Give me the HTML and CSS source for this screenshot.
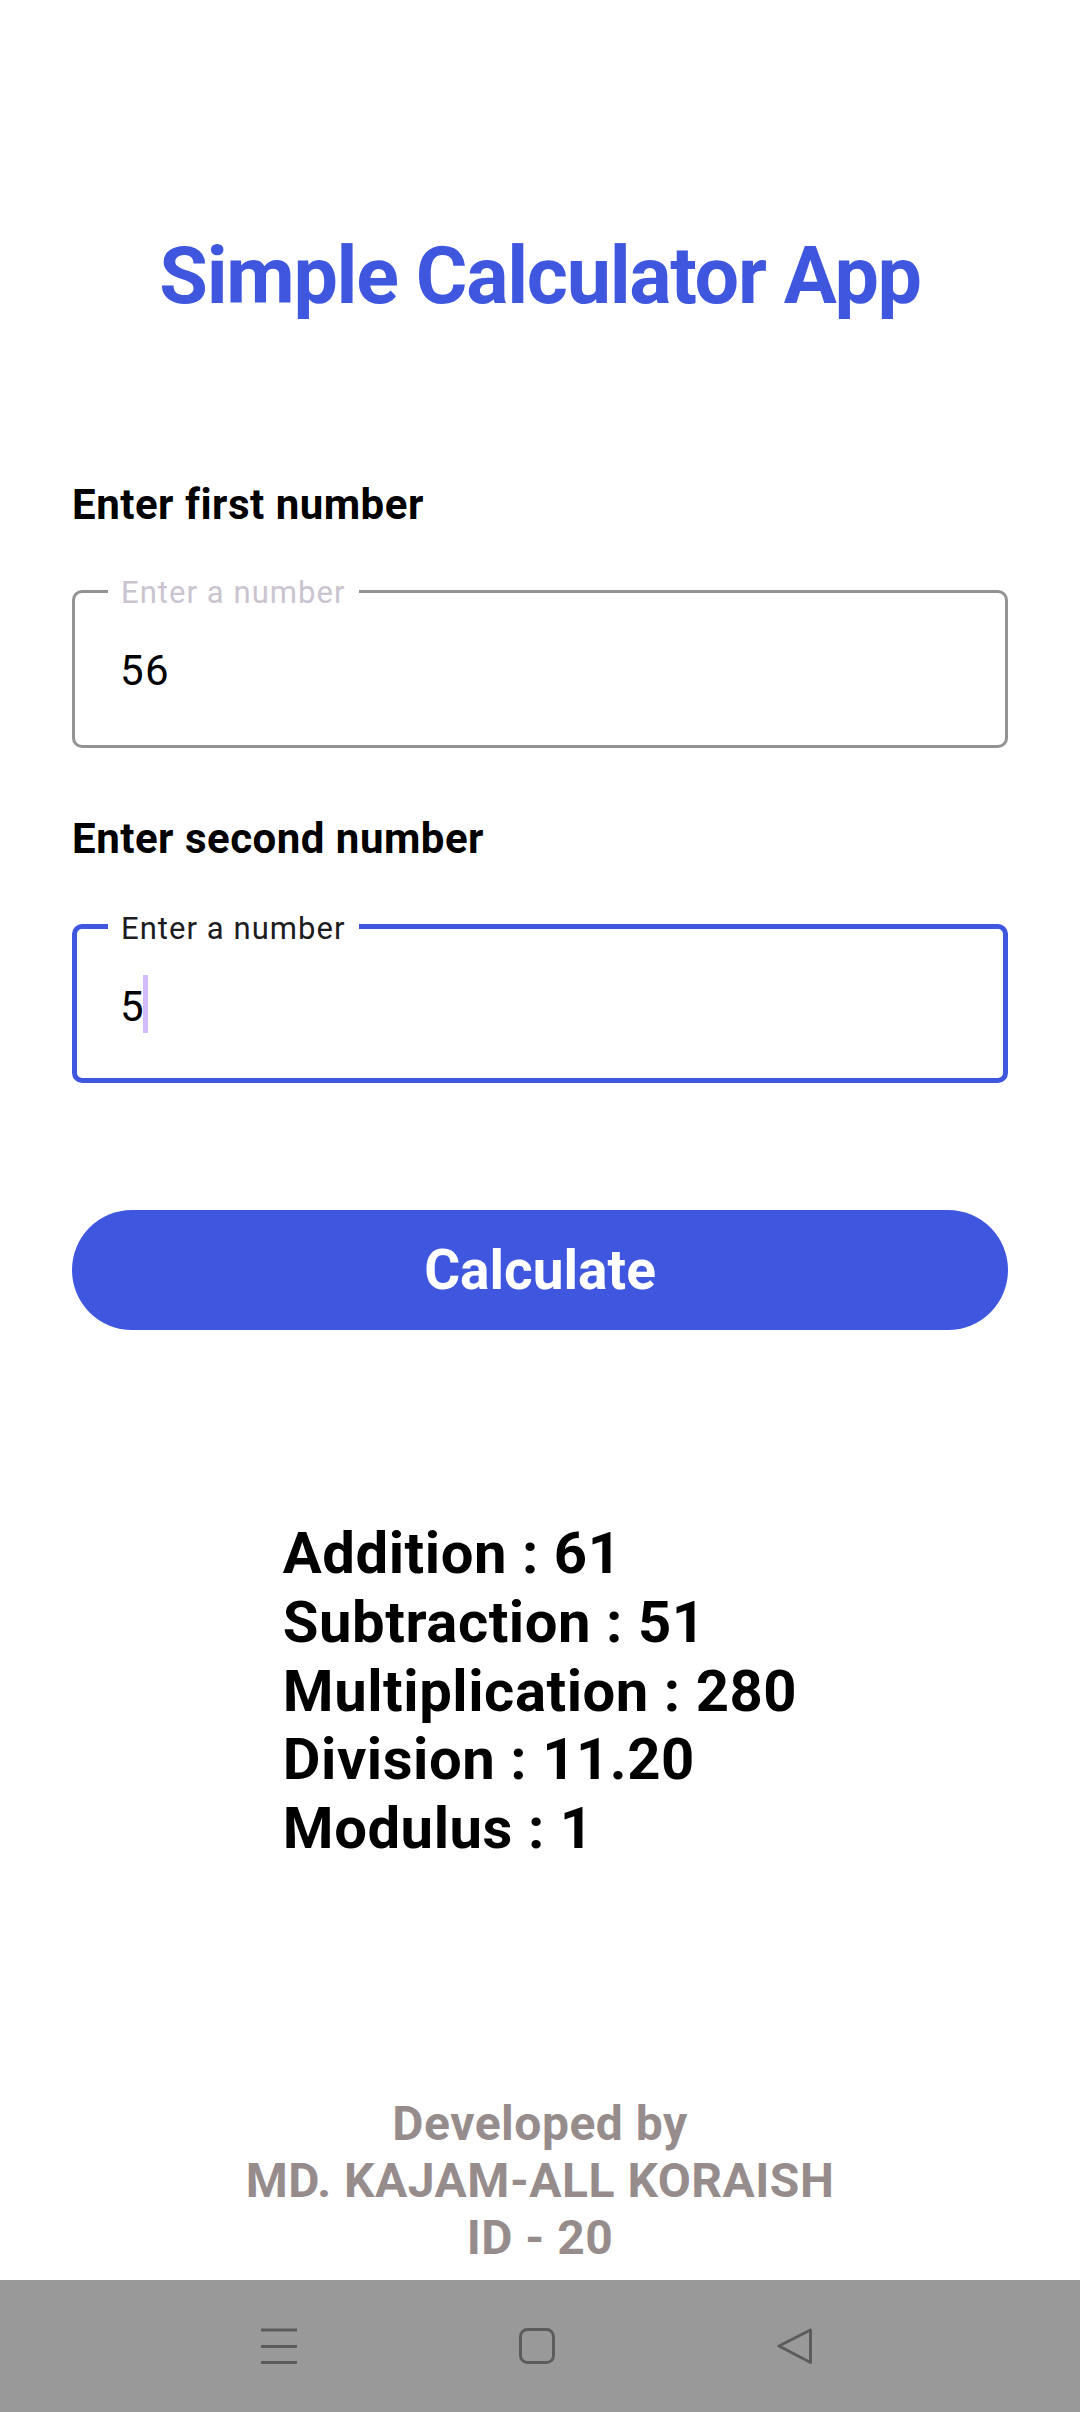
FILE: index.html
```html
<!DOCTYPE html>
<html lang="en">
<head>
<meta charset="utf-8">
<title>Simple Calculator App</title>
<link rel="stylesheet" href="styles.css">
</head>
<body>
<div class="screen">
  <main class="content">
    <h1 class="title">Simple Calculator App</h1>

    <div class="field-label field-label--first">Enter first number</div>
    <div class="field">
      <span class="field-legend">Enter a number</span>
      <span class="field-value">56</span>
    </div>

    <div class="field-label field-label--second">Enter second number</div>
    <div class="field field--focused">
      <span class="field-legend">Enter a number</span>
      <span class="field-value">5<span class="caret"></span></span>
    </div>

    <button class="calc-btn" type="button">Calculate</button>

    <div class="results">
      <div class="results-list">
        <div>Addition : 61</div>
        <div>Subtraction : 51</div>
        <div>Multiplication : 280</div>
        <div>Division : 11.20</div>
        <div>Modulus : 1</div>
      </div>
    </div>

    <footer class="credit">
      <div>Developed by</div>
      <div>MD. KAJAM-ALL KORAISH</div>
      <div>ID - 20</div>
    </footer>
  </main>

  <nav class="navbar">
    <svg class="nav-icon nav-icon--menu" width="36" height="36" viewBox="0 0 36 36">
      <line x1="0" y1="2" x2="36" y2="2"/>
      <line x1="0" y1="18.5" x2="36" y2="18.5"/>
      <line x1="0" y1="34.5" x2="36" y2="34.5"/>
    </svg>
    <svg class="nav-icon" width="36" height="36" viewBox="0 0 36 36">
      <rect x="1.5" y="1.5" width="33" height="33" rx="7" ry="7"/>
    </svg>
    <svg class="nav-icon" width="36" height="36" viewBox="0 0 36 36">
      <path d="M33.5 2 L2 18 L33.5 34.5 Z"/>
    </svg>
  </nav>
</div>
</body>
</html>
```

FILE: styles.css
```css
* {
  box-sizing: border-box;
}

html, body {
  margin: 0;
  padding: 0;
  background: #ffffff;
}

body {
  font-family: Roboto, "Noto Sans", "Liberation Sans", sans-serif;
  color: #000000;
}

.screen {
  width: 1080px;
  height: 2412px;
  display: flex;
  flex-direction: column;
  overflow: hidden;
}

.content {
  flex: 1;
  display: flex;
  flex-direction: column;
  padding: 230px 72px 0;
}

.title {
  margin: 0;
  font-size: 79px;
  line-height: 92px;
  font-weight: 700;
  letter-spacing: -1.3px;
  color: #3f56de;
  text-align: center;
}

.field-label {
  font-size: 42px;
  line-height: 50px;
  font-weight: 700;
  letter-spacing: 0.5px;
  color: #000000;
}

.field-label--first {
  margin-top: 158px;
}

.field-label--second {
  margin-top: 66px;
}

.field {
  position: relative;
  margin-top: 60px;
  height: 158px;
  border: 3px solid #939393;
  border-radius: 10px;
  padding: 53px 0 0 45px;
}

.field--focused {
  height: 159px;
  border: 5px solid #3f56de;
  padding: 53px 0 0 43px;
}

.field-legend {
  position: absolute;
  top: -15px;
  left: 33px;
  padding: 0 13px;
  background: #ffffff;
  font-size: 31px;
  line-height: 30px;
  letter-spacing: 1.05px;
  color: #cac4d0;
  white-space: nowrap;
}

.field--focused .field-legend {
  left: 31px;
  color: #1c1b1f;
}

.field-value {
  position: relative;
  display: inline-block;
  font-size: 42px;
  line-height: 50px;
  letter-spacing: 1.3px;
  color: #000000;
}

.caret {
  position: absolute;
  left: 100%;
  margin-left: -2px;
  top: -7px;
  width: 5px;
  height: 58px;
  background: #d0bcff;
}

.calc-btn {
  margin-top: 127px;
  height: 120px;
  width: 100%;
  border: none;
  border-radius: 60px;
  background: #3f56de;
  color: #ffffff;
  font-family: Roboto, "Noto Sans", "Liberation Sans", sans-serif;
  font-size: 55px;
  font-weight: 700;
  line-height: 64px;
  padding: 0;
  display: flex;
  align-items: center;
  justify-content: center;
}

.results {
  margin-top: 189px;
  display: flex;
  justify-content: center;
}

.results-list {
  font-size: 58px;
  line-height: 68.75px;
  font-weight: 700;
  letter-spacing: 0.55px;
  text-align: left;
  color: #000000;
}

.credit {
  margin-top: 232px;
  font-size: 48px;
  line-height: 57px;
  font-weight: 700;
  letter-spacing: 0.5px;
  color: #978c8c;
  text-align: center;
}

.navbar {
  height: 132px;
  flex: none;
  background: #999999;
  display: flex;
  align-items: center;
  justify-content: center;
  gap: 222px;
  padding-right: 6px;
}

.nav-icon {
  display: block;
  fill: none;
  stroke: #5c5c5c;
  stroke-width: 3;
  stroke-linejoin: round;
  stroke-linecap: butt;
}
```
